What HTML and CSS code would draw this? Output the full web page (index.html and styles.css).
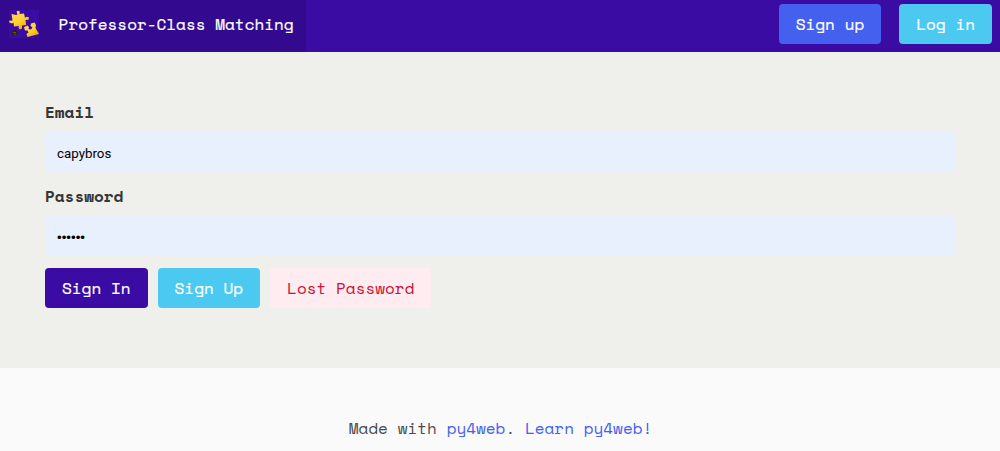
FILE: index.html
```html
<!DOCTYPE html>
<html lang="en"><head><meta charset="utf-8"><title>Professor-Class Matching</title><link rel="stylesheet" href="styles.css"></head>
<body>
<nav class="navbar">
<a class="brand"><svg class="logo" viewBox="0 0 30 28">
<defs><linearGradient id="gold" x1="0" y1="0" x2="0.6" y2="1"><stop offset="0" stop-color="#ffd84e"/><stop offset=".6" stop-color="#ffd23c"/><stop offset="1" stop-color="#efb000"/></linearGradient></defs>
<rect width="30" height="28" fill="#3a0ca3"/>
<path d="M2.500 4L7 5L8.500 4.500L7.500 1.500L9 .8L10.800 1.500L10.500 4L15 3.500L16 7.800L18 6.800L20 7.500L19.500 9.800L16.500 10L17.200 15L13 15.500L13 18.500L11 19.500L9.500 18L10 16L5 16.500L4.500 12.500L3 13.500L.5 12.500L0 10.800L3.500 10.500Z" fill="url(#gold)"/>
<path d="M15 17L18.500 15.500L20 17L19.500 19L22 19.500L23.500 17.500L21.500 16L22 13.500L25.500 12.500L27 15L26.500 18L30 24L26 25L18.500 27L17.500 24L19.500 22.500L18.500 20.500L16 20.500Z" fill="url(#gold)"/>
<path d="M3 21L6 20L9 22L8 25L5 26L2.500 24Z" fill="#29231d"/><path d="M4 22.500h3M5 25l2-1" stroke="#766025" stroke-width=".8"/>
</svg><span class="title">Professor-Class Matching</span></a>
<div class="actions"><a class="button blue">Sign up</a><a class="button cyan">Log in</a></div>
</nav>
<main class="content"><form class="form">
<label class="label">Email</label><input class="input" value="capybros">
<label class="label">Password</label><input class="input password" type="password" value="secret">
<div class="buttons"><a class="button indigo">Sign In</a><a class="button cyan">Sign Up</a><a class="button pink">Lost Password</a></div>
</form></main>
<footer class="footer">Made with <a>py4web</a>. <a>Learn py4web!</a></footer>
</body></html>
```
FILE: styles.css
```css
*{box-sizing:border-box}
body{margin:0;height:451px;overflow:hidden;background:#fafafa;font:16px/24px "Space Mono","Liberation Mono",monospace;color:#4a4a4a}
.navbar{height:52px;background:#3a0ca3;display:flex;justify-content:space-between}
.brand{width:306px;background:#330a8f;color:#fff;display:flex;align-items:center;padding:0 9px 4px}
.logo{width:30px;height:28px;margin-right:19.6px}
.title,.navbar .button,.indigo,.cyan{-webkit-text-stroke:.2px #fff}
.actions{display:flex;gap:18px;padding:4px 8px}
.button{height:40px;border-radius:4px;display:flex;align-items:center;justify-content:center;color:#fff;padding:0 17px;white-space:nowrap}
.blue{background:#4361ee}.cyan{background:#4cc9f0}.indigo{background:#3a0ca3}.pink{background:#feecf0;color:#cc0f35}
.content{height:316px;background:#efefeb;padding:48px 45px}
.label{display:block;font-weight:700;color:#363636;margin-bottom:8px}
.input{display:block;width:100%;height:40px;border:0;border-radius:4px;background:#e8f0fe;padding:2px 12px 0;margin-bottom:12px;font:13.333px Roboto,sans-serif;color:#000}
.password{font-family:"Liberation Sans",sans-serif}
.buttons{display:flex;gap:10px}
.footer{padding:48px 0 0 1px;text-align:center}.footer a{color:#4361ee}
```
